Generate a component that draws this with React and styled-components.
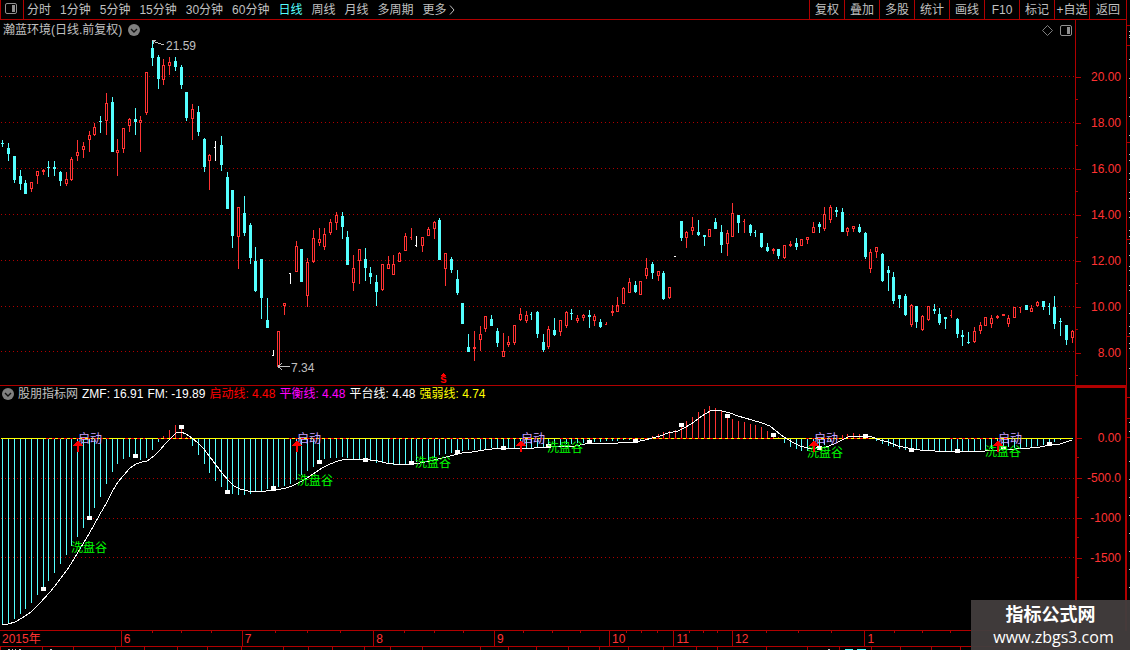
import React, { useState } from "react";
import styled, { createGlobalStyle, css } from "styled-components";

// colors
const RED = "#b00000";
const UP = "#ff3232";
const DOWN = "#54ffff";
const GREY = "#c0c0c0";

// data
const PERIODS = ["分时", "1分钟", "5分钟", "15分钟", "30分钟", "60分钟", "日线", "周线", "月线", "多周期"];
const TOOLS = ["复权", "叠加", "多股", "统计", "画线", "F10", "标记", "+自选", "返回"];

const READINGS = [
   { text: "ZMF: 16.91", color: "#fff" },
   { text: "FM: -19.89", color: "#fff" },
   { text: "启动线: 4.48", color: "#f00" },
   { text: "平衡线: 4.48", color: "#f0f" },
   { text: "平台线: 4.48", color: "#fff" },
   { text: "强弱线: 4.74", color: "#ff0" },
];

const MONTHS = [
   { label: "2015年", days: 122 },
   { label: "6", days: 121, weeks: true },
   { label: "7", days: 132, weeks: true },
   { label: "8", days: 121, weeks: true },
   { label: "9", days: 115, weeks: true },
   { label: "10", days: 63, weeks: true },
   { label: "11", days: 57, weeks: true },
   { label: "12", days: 133, weeks: true },
   { label: "1", days: 115, weeks: true },
   { label: "", days: 96 },
];

// kind, high, body top, body bottom, low
// u: up, d: down, w / t / k: white, red or cyan bar with only an opening tick
const CANDLES = `
d 140 143 144 147|d 143 148 154 161|d 156 156 180 183|d 170 176 184 190|d 180 183 194 194|u 182 182 189 192
u 171 171 176 184|u 169 170 172 175|d 161 167 168 177|d 161 167 169 176|d 171 172 181 186|u 172 179 184 186
u 157 159 180 181|u 140 152 156 161|u 142 146 150 158|u 131 135 140 152|u 123 127 135 136|d 116 121 122 133
u 93 103 121 135|d 97 102 152 152|u 139 150 153 176|u 128 128 149 153|u 118 119 126 132|d 108 119 122 135
u 116 120 123 152|u 72 72 113 115|d 41 48 58 66|d 55 57 79 89|u 59 65 80 85|u 57 62 66 75
d 57 61 67 71|d 65 67 85 89|d 92 92 118 121|u 104 109 119 140|d 106 112 132 136|d 138 139 167 172
u 154 155 161 190|w 141 147 148 161|d 136 145 165 171|d 172 177 209 209|d 190 190 236 248|u 207 207 237 269
d 196 213 233 236|d 223 225 258 264|d 247 261 291 292|d 259 259 298 319|d 298 320 328 328|w 350 355 356 356
u 331 331 367 367|u 303 303 306 315|w 273 273 274 284|u 241 246 272 272|d 249 249 282 282|u 258 262 296 307
u 230 238 262 263|u 228 239 243 246|u 228 234 247 250|u 219 222 233 235|u 212 215 223 230|d 212 216 227 239
d 231 237 265 265|u 255 268 283 291|u 249 249 261 284|d 248 259 268 281|d 267 273 277 284|d 275 282 292 306
u 264 264 290 291|u 256 264 269 269|u 255 264 275 275|u 252 253 262 262|u 233 236 251 251|t 228 237 238 240
w 236 245 246 247|u 237 237 246 252|u 227 229 236 236|u 221 222 229 239|d 218 220 260 260|u 253 253 269 286
d 257 259 270 273|d 270 279 293 295|d 303 303 324 324|d 334 347 352 352|u 331 347 349 361|u 326 334 340 351
u 316 316 329 332|d 315 319 326 326|d 328 331 343 347|u 333 351 357 357|u 336 342 345 347|u 325 325 343 345
u 308 314 320 321|u 311 315 321 323|k 312 314 315 320|d 311 312 334 338|d 334 342 350 352|u 326 329 347 349
d 318 330 335 336|u 320 320 332 336|u 311 312 326 328|d 309 313 314 320|u 315 318 321 323|u 314 315 318 321
d 310 315 317 328|u 314 316 321 326|d 319 322 327 328|t 322 324 325 325|u 305 311 313 316|u 297 305 312 312
u 287 288 304 304|u 278 282 293 293|d 281 285 292 293|u 281 281 295 295|u 258 268 276 279|d 262 264 273 279
u 271 271 276 281|d 271 273 299 300|u 287 287 298 299|w 256 256 257 257|d 221 221 238 241|u 231 232 238 248
u 217 227 231 235|d 220 232 235 236|d 235 235 237 246|u 229 229 237 237|d 218 222 229 229|d 225 232 245 253
u 230 233 244 256|u 203 213 237 237|d 215 215 223 233|t 219 221 222 233|d 224 225 233 236|k 230 232 233 237
d 233 233 247 248|d 243 247 251 252|u 248 249 251 254|d 249 249 256 259|u 245 245 258 259|u 241 244 246 247
d 238 243 247 250|u 239 239 246 246|u 237 237 240 244|u 222 227 233 233|d 222 224 227 233|u 207 214 229 231
u 205 207 220 223|d 207 210 212 217|d 208 212 232 232|u 227 228 232 236|u 226 226 229 232|d 224 227 232 233
d 232 233 257 259|u 249 252 269 273|u 247 247 252 258|d 253 254 281 282|d 266 270 273 291|d 272 277 301 304
d 295 295 299 308|d 294 296 315 316|u 304 305 325 327|d 306 306 322 328|u 315 316 330 331|u 306 306 320 321
d 304 309 311 314|d 308 314 323 325|d 317 317 319 329|t 310 315 316 318|d 318 319 334 338|d 330 335 337 346
d 332 342 343 344|u 327 331 342 343|u 322 325 331 334|u 317 317 326 326|u 315 318 324 328|u 315 316 318 319
u 314 314 316 316|u 315 318 324 327|u 307 307 318 318|t 307 307 308 313|d 305 305 310 310|u 305 308 312 312
u 301 302 306 307|d 301 301 307 310|k 303 306 307 315|d 296 307 324 329|d 318 321 322 336|d 325 325 340 345
u 330 331 338 343`
   .trim()
   .split(/[|\n]/)
   .map((row) => {
      const [kind, ...prices] = row.split(" ");
      return [kind, ...prices.map(Number)];
   });

const BARS = [
   625, 623, 619, 614, 609, 603, 595, 589, 581, 573, 564, 555, 546, 537, 528, 518, 508, 497, 484, 472, 464, 459, 457,
   456, 460, 458, 450, 442, 436, 430, 425, 427, 437, 446, 455, 464, 473, 481, 487, 492, 494, 495, 495, 494, 492, 491,
   489, 488, 487, 486, 484, 480, 475, 471, 467, 462, 459, 458, 458, 457, 458, 459, 459, 460, 461, 463, 463, 464, 465,
   465, 464, 463, 462, 461, 460, 458, 455, 454, 453, 452, 451, 450, 450, 450, 449, 448, 448, 448, 448, 448, 448, 448,
   448, 447, 447, 446, 445, 445, 444, 444, 443, 443, 442, 442, 442, 441, 441, 441, 440, 440, 441, 440, 439, 436, 434,
   432, 431, 430, 425, 421, 417, 412, 409, 406, 408, 411, 416, 419, 421, 422, 424, 425, 427, 431, 435, 437, 443, 447,
   449, 451, 451, 450, 448, 445, 442, 440, 435, 434, 433, 434, 436, 438, 441, 444, 446, 447, 449, 450, 450, 450, 450,
   451, 451, 451, 451, 451, 451, 451, 451, 451, 450, 450, 449, 449, 448, 447, 448, 448, 447, 447, 446, 445, 444, 442,
   440, 439, 439,
];

const CURVE =
   "2,625 8,624 15,622 22,618 31,612 40,603 50,592 58,582 67,570 74,559 80,549 86,539 94,525 100,514 106,504 112,492 118,482 124,475 130,468 136,464 142,462 147,461 154,456 160,450 166,443 172,437 176,433 181,432 186,434 192,438 198,443 204,449 210,457 216,465 222,473 228,480 234,486 240,489 248,491 256,492 266,491 276,490 286,488 292,486 298,483 304,480 310,476 316,472 322,468 330,464 338,461 346,459 354,459 362,459 370,460 378,461 386,463 394,464 410,464 420,463 430,461 438,459 446,457 454,455 462,453 472,452 484,450 500,448 534,448 548,447 562,446 575,446 585,444 600,443 618,443 635,442 645,440 652,438 660,436 668,433 678,431 686,427 694,422 702,416 710,411 716,410 722,411 730,413 738,416 745,418 752,420 762,423 770,426 776,431 784,437 792,442 800,446 808,448 816,448 826,447 834,444 842,440 848,437 856,436 865,436 872,437 880,440 888,442 898,446 908,448 920,450 935,451 960,452 985,451 1000,450 1015,449 1030,448 1040,447 1050,445 1060,444 1066,442 1072,440";

const STARTS = [78, 297, 521, 814, 998];
const VALLEYS = [
   [71, 548],
   [297, 481],
   [415, 463],
   [547, 448],
   [807, 453],
   [985, 452],
];
const RED_RANGES = [
   [46, 110],
   [125, 145],
   [158, 190],
   [289, 350],
   [390, 545],
   [560, 775],
   [806, 870],
   [950, 1010],
];

const SIDE_TICKS = [25, 45, 142, 239, 336, 397, 418, 437];
const SIDE_DOTS = [
   31, 35, 37, 59, 78, 97, 116, 135, 154, 160, 173, 179, 192, 198, 211, 217, 230, 236, 243, 255, 266, 270, 285, 290, 313,
   326, 333, 343, 348, 368, 422, 431, 461, 479, 497, 515, 533, 551, 569, 587,
];
const FOOT_TICKS = [
   0, 42, 73, 115, 144, 177, 207, 241, 283, 308, 332, 364, 390, 422, 480, 508, 536, 568, 599, 628, 663, 696, 717, 766,
   807, 839, 871, 900, 931, 960,
];

const STEP = 5.74735;
const dayX = (i) => 2 + Math.ceil(STEP * i);

// chart areas, in chart units
const PRICE = { top: 38, width: 1075, height: 347 };
const FLOW = { top: 402, width: 1075, height: 228 };
const ZERO = 438;

// styles
const GlobalStyle = createGlobalStyle`
   * {
      box-sizing: border-box;
   }

   body {
      margin: 0;
      background: #000;
      overflow: hidden;
      font-family: "Liberation Sans", "Noto Sans CJK SC", sans-serif;
      font-size: 12px;
      line-height: 16px;
      color: ${GREY};
   }
`;

const Page = styled.div`
   position: relative;
   display: flex;
   flex-direction: column;
   height: 100vh;
`;

const plainButton = css`
   margin: 0;
   padding: 0;
   border: 0;
   background: none;
   font: inherit;
   color: inherit;
   white-space: nowrap;
   cursor: pointer;
`;

const Toolbar = styled.header`
   display: flex;
   height: 20px;
   margin-right: 3px;
   border: solid ${RED};
   border-width: 0 1px 1px;
`;

const LayoutButton = styled.button`
   ${plainButton}
   display: flex;
   align-items: center;
   justify-content: center;
   width: 23px;
   padding: 0 2px 2px 0;
   border-right: 1px solid ${RED};
`;

const PeriodList = styled.nav`
   display: flex;
   flex: 1;
   gap: 9px;
   padding: 0 3px;
`;

const PeriodButton = styled.button`
   ${plainButton}
   display: flex;
   align-items: center;
   gap: 2px;
   color: ${({ $active }) => ($active ? DOWN : GREY)};
`;

const ToolButton = styled.button`
   ${plainButton}
   width: 35px;
   border-left: 1px solid ${RED};

   &:last-child {
      width: 37px;
   }
`;

const Body = styled.div`
   display: flex;
   flex: 1;
   min-height: 0;
`;

const Panes = styled.main`
   display: grid;
   flex: 1;
   min-width: 0;
   grid-template-columns: minmax(0, 1fr) 52px;
   grid-template-rows: minmax(0, 366fr) minmax(0, 245fr);
`;

const Pane = styled.section`
   display: flex;
   flex-direction: column;
   min-height: 0;
   border-bottom: 1px solid ${RED};
`;

const PaneHeader = styled.div`
   display: flex;
   align-items: center;
   gap: ${({ $gap }) => $gap}px;
   height: ${({ $height }) => $height}px;
   padding: ${({ $height }) => $height - 16}px 3px 0 ${({ $start }) => $start}px;
   white-space: nowrap;
`;

const PaneTools = styled.div`
   display: flex;
   align-items: center;
   gap: 7px;
   margin-left: auto;
`;

const IconButton = styled.button`
   ${plainButton}
   display: flex;
`;

const Reading = styled.span`
   color: ${({ $color }) => $color};
`;

const Plot = styled.div`
   position: relative;
   flex: 1;
   min-height: 0;

   > svg {
      display: block;
      width: 100%;
      height: 100%;
   }
`;

const Note = styled.span`
   position: absolute;
   height: 16px;
   margin-top: -8px;
   color: ${({ $color }) => $color};
   font-weight: ${({ $bold }) => ($bold ? 700 : 400)};
   white-space: nowrap;
`;

const Arrows = styled.svg`
   position: absolute;
   inset: 0;
   pointer-events: none;
`;

const Axis = styled.div`
   display: flex;
   flex-direction: column;
   padding-top: ${({ $boxed }) => ($boxed ? 14 : 18)}px;
   border: solid ${RED};
   border-width: ${({ $boxed }) => ($boxed ? "2px 2px 0" : "0 1px 1px")};
   color: ${UP};
`;

const AxisSpace = styled.div`
   flex: ${({ $size }) => $size} 0 0;
`;

const AxisLabel = styled.div`
   display: flex;
   flex: ${({ $size }) => $size} 0 0;
   align-items: center;
   justify-content: flex-end;
   padding-right: ${({ $size }) => ($size > 40 ? 5 : 4)}px;
   background:
      linear-gradient(${RED}, ${RED}) 0 50% / 5px 1px no-repeat,
      linear-gradient(${RED}, ${RED}) 0 100% / 2px 1px no-repeat;
`;

const SideRuler = styled.svg`
   flex: none;
   width: 3px;
   height: 611px;
`;

const TimeAxis = styled.div`
   display: flex;
   height: 16px;
   margin-right: 55px;
   border-bottom: 1px solid ${RED};
   color: ${UP};
`;

const Month = styled.div`
   display: flex;
   flex: ${({ $days }) => $days} 0 0;
   align-items: center;
   min-width: 0;
   padding-left: 2px;
   border-left: ${({ $line }) => ($line ? `1px solid ${RED}` : "0")};
   white-space: nowrap;
   background: ${({ $weeks }) =>
      $weeks
         ? [25, 50, 75].map((at) => `linear-gradient(${RED}, ${RED}) ${at}% 0 / 1px 2px no-repeat`).join(", ")
         : "none"};
`;

const FootRuler = styled.svg`
   display: block;
   width: 100%;
   height: 3px;
`;

const Watermark = styled.aside`
   position: absolute;
   right: 0;
   bottom: 0;
   width: 159px;
   height: 50px;
   background: rgba(66, 60, 60, 0.96);
   color: #fff;
   text-align: center;
`;

const WatermarkTitle = styled.div`
   font-family: "Noto Sans CJK SC", sans-serif;
   font-size: 18px;
   font-weight: 700;
   line-height: 26px;
`;

const WatermarkLink = styled.a`
   display: block;
   padding-left: 6px;
   font-family: "Open Sans", sans-serif;
   font-size: 16px;
   line-height: 22px;
   color: inherit;
   text-decoration: none;
`;

// components
const PanelIcon = ({ color }) => (
   <svg width="12" height="11" viewBox="0 0 12 11" aria-hidden="true">
      <rect x="0.5" y="0.5" width="11" height="10" rx="1.5" fill="none" stroke={color} />
      <rect x="7" y="2" width="3" height="7" fill={color} />
   </svg>
);

const DiamondIcon = () => (
   <svg width="11" height="11" viewBox="0 0 11 11" aria-hidden="true">
      <path d="M5.5 .5l5 5-5 5-5-5z" fill="none" stroke="#808080" />
   </svg>
);

const ChevronIcon = () => (
   <svg width="12" height="12" viewBox="0 0 12 12" aria-hidden="true">
      <circle cx="6" cy="6" r="6" fill="#808080" />
      <path d="M3 5l3 3 3-3" fill="none" stroke="#111" strokeWidth="1.4" />
   </svg>
);

const MoreIcon = () => (
   <svg width="6" height="10" viewBox="0 0 6 10" aria-hidden="true">
      <path d="M1 .5L5 5 1 9.5" fill="none" stroke={GREY} />
   </svg>
);

function Gridlines({ rows }) {
   return rows.map((y) => (
      <path key={y} d={`M1 ${y + 0.5}H1075`} stroke={RED} strokeDasharray="1 3" fill="none" />
   ));
}

function Candle({ x, candle }) {
   const [kind, high, top, bottom, low] = candle;
   const mid = x + 0.5;

   if (kind === "u") {
      const hollow = bottom - top > 2;
      const body = hollow
         ? `M${x - 0.5} ${top + 0.5}H${x + 1.5}V${bottom - 0.5}H${x - 0.5}Z`
         : `M${x - 1} ${(top + bottom) / 2}H${x + 2}`;
      return (
         <>
            <path d={`M${mid} ${high}V${top}M${mid} ${bottom}V${low}`} stroke={UP} />
            <path d={body} stroke={UP} strokeWidth={hollow ? 1 : bottom - top} fill="none" />
         </>
      );
   }
   if (kind === "d") {
      return (
         <>
            <path d={`M${mid} ${high}V${low}`} stroke={DOWN} />
            <rect x={x - 1} y={top} width="3" height={bottom - top} fill={DOWN} />
         </>
      );
   }
   const color = { w: "#fff", t: UP, k: DOWN }[kind];
   return <path d={`M${mid} ${high}V${low}M${x - 1} ${top + 0.5}H${x + 1}`} stroke={color} />;
}

function place(area, x, y) {
   return {
      left: `${(x / area.width) * 100}%`,
      top: `${((y - area.top) / area.height) * 100}%`,
   };
}

function PriceChart() {
   return (
      <Plot>
         <svg
            viewBox={`0 ${PRICE.top} ${PRICE.width} ${PRICE.height}`}
            preserveAspectRatio="none"
            shapeRendering="crispEdges"
            role="img"
            aria-label="日线"
         >
            <Gridlines rows={[76, 122, 168, 214, 260, 306, 351]} />
            {CANDLES.map((candle, i) => (
               <Candle key={i} x={dayX(i)} candle={candle} />
            ))}
            <path d="M152 40.5H156M153.5 40V44M154 41.5L158 43L164 45" fill="none" stroke={GREY} />
            <path d="M279 366.5H290M278 366.5L282 363.5M278 366.5L282 369.5" fill="none" stroke={GREY} />
            <rect x="278" y="365" width="2" height="3" fill={GREY} />
            <path d="M441 376L443.5 373L446 376Z" fill="#f00" />
         </svg>
         <Note $color={GREY} style={place(PRICE, 166, 46)}>
            21.59
         </Note>
         <Note $color={GREY} style={place(PRICE, 291, 368)}>
            7.34
         </Note>
         <Note $color="#f00" $bold style={place(PRICE, 440, 379)}>
            s
         </Note>
      </Plot>
   );
}

function FlowChart() {
   const markers = BARS.map((y, i) => ({ x: dayX(i), y })).filter((_, i) => (i < 96 ? i % 8 === 7 : i % 8 === 6));

   return (
      <Plot>
         <svg
            viewBox={`0 ${FLOW.top} ${FLOW.width} ${FLOW.height}`}
            preserveAspectRatio="none"
            shapeRendering="crispEdges"
            role="img"
            aria-label="股朋指标网"
         >
            <Gridlines rows={[478, 518, 557]} />
            {BARS.map((y, i) => (
               <path key={i} d={`M${dayX(i) + 0.5} ${ZERO}V${y}`} stroke={y < ZERO ? UP : DOWN} />
            ))}
            <path d={`M1 ${ZERO + 0.5}H1072`} stroke="#ff0" />
            {RED_RANGES.map(([from, to]) => (
               <path key={from} d={`M${from} ${ZERO + 0.5}H${to}`} stroke="#f00" strokeDasharray="3 3" />
            ))}
            <polyline points={CURVE} fill="none" stroke="#fff" />
            {markers.map(({ x, y }) => (
               <rect key={x} x={x - 2} y={y - 2} width="5" height="4" fill="#fff" />
            ))}
         </svg>
         {STARTS.map((x) => (
            <Note key={x} $color="#c8a0ff" style={place(FLOW, x, 439)}>
               启动
            </Note>
         ))}
         {VALLEYS.map(([x, y]) => (
            <Note key={x} $color="#0f0" style={place(FLOW, x, y)}>
               洗盘谷
            </Note>
         ))}
         <Arrows
            viewBox={`0 ${FLOW.top} ${FLOW.width} ${FLOW.height}`}
            preserveAspectRatio="none"
            shapeRendering="crispEdges"
            aria-hidden="true"
         >
            {STARTS.map((x) => (
               <path key={x} d={`M${x} 440l5 6h-4v6h-2v-6h-4z`} fill="#f00" />
            ))}
         </Arrows>
      </Plot>
   );
}

function App() {
   const [period, setPeriod] = useState("日线");

   return (
      <Page>
         <GlobalStyle />
         <Toolbar>
            <LayoutButton type="button" aria-label="布局">
               <PanelIcon color="#909090" />
            </LayoutButton>
            <PeriodList>
               {PERIODS.map((name) => (
                  <PeriodButton key={name} type="button" $active={name === period} onClick={() => setPeriod(name)}>
                     {name}
                  </PeriodButton>
               ))}
               <PeriodButton type="button">
                  更多
                  <MoreIcon />
               </PeriodButton>
            </PeriodList>
            {TOOLS.map((name) => (
               <ToolButton key={name} type="button">
                  {name}
               </ToolButton>
            ))}
         </Toolbar>
         <Body>
            <Panes>
               <Pane>
                  <PaneHeader $height={18} $gap={6} $start={3}>
                     <span>瀚蓝环境(日线.前复权)</span>
                     <IconButton type="button" aria-label="展开">
                        <ChevronIcon />
                     </IconButton>
                     <PaneTools>
                        <IconButton type="button" aria-label="标志">
                           <DiamondIcon />
                        </IconButton>
                        <IconButton type="button" aria-label="侧栏">
                           <PanelIcon color="#909090" />
                        </IconButton>
                     </PaneTools>
                  </PaneHeader>
                  <PriceChart />
               </Pane>
               <Axis>
                  <AxisSpace $size={16} />
                  {["20.00", "18.00", "16.00", "14.00", "12.00", "10.00", "8.00"].map((label) => (
                     <AxisLabel key={label} $size={46}>
                        {label}
                     </AxisLabel>
                  ))}
                  <AxisSpace $size={9} />
               </Axis>
               <Pane>
                  <PaneHeader $height={16} $gap={4} $start={2}>
                     <IconButton type="button" aria-label="展开指标">
                        <ChevronIcon />
                     </IconButton>
                     <span>股朋指标网</span>
                     {READINGS.map(({ text, color }) => (
                        <Reading key={text} $color={color}>
                           {text}
                        </Reading>
                     ))}
                  </PaneHeader>
                  <FlowChart />
               </Pane>
               <Axis $boxed>
                  <AxisSpace $size={16} />
                  {["0.00", "-500.0", "-1000", "-1500"].map((label) => (
                     <AxisLabel key={label} $size={40}>
                        {label}
                     </AxisLabel>
                  ))}
                  <AxisSpace $size={53} />
               </Axis>
            </Panes>
            <SideRuler viewBox="0 20 3 611" shapeRendering="crispEdges" aria-hidden="true">
               {SIDE_TICKS.map((y) => (
                  <rect key={y} x="0" y={y} width="3" height="1" fill={RED} />
               ))}
               {SIDE_DOTS.map((y) => (
                  <rect key={y} x="2" y={y} width="1" height="1" fill={GREY} />
               ))}
            </SideRuler>
         </Body>
         <TimeAxis>
            {MONTHS.map(({ label, days, weeks }, i) => (
               <Month key={label} $days={days} $weeks={weeks} $line={i > 0 && label}>
                  {label}
               </Month>
            ))}
         </TimeAxis>
         <FootRuler shapeRendering="crispEdges" aria-hidden="true">
            {FOOT_TICKS.map((x) => (
               <rect key={x} x={x} y="0" width="1" height="3" fill={RED} />
            ))}
            <path d="M8 2.5h2M12 2.5h1M15 2.5h1M19 2.5h2M50 2.5h2M828 2.5h2" stroke={GREY} />
            <path d="M845 2.5h8M857 2.5h9" stroke={DOWN} />
         </FootRuler>
         <Watermark>
            <WatermarkTitle>指标公式网</WatermarkTitle>
            <WatermarkLink href="#">www.zbgs3.com</WatermarkLink>
         </Watermark>
      </Page>
   );
}

export default App;
